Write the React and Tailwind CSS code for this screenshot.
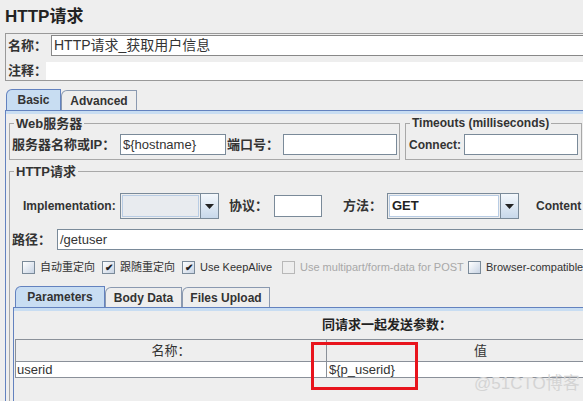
function Field({ className = "", children }) {
  return (
    <div className={`h-[21px] border border-[#7a8a99] bg-white px-[2px] text-[13px] leading-[19px] text-[#333] whitespace-nowrap ${className}`}>
      {children}
    </div>
  );
}

function Combo({ className = "", value, disabled }) {
  return (
    <div className={`flex h-[26px] border border-[#7a8a99] ${className}`}>
      <div className={`flex-1 m-[1px] border border-[#b8cce4] px-[2px] text-[13px] leading-[20px] font-bold text-[#222] ${disabled ? "bg-[#e8ebef]" : "bg-white"}`}>
        {value}
      </div>
      <div className="w-[18px] border-l border-[#7a8a99] bg-gradient-to-b from-[#f4f8fc] to-[#c8d8ea] flex items-center justify-center">
        <svg width="9" height="5" viewBox="0 0 9 5">
          <path d="M0 0h9L4.5 5z" fill="#222" />
        </svg>
      </div>
    </div>
  );
}

function Check({ checked, disabled, label, className = "" }) {
  return (
    <div className={`flex items-center h-[13px] shrink-0 ${className}`}>
      <div
        className={`w-[13px] h-[13px] border flex items-center justify-center ${
          disabled ? "border-[#b8b8b8] bg-[#eeeeee]" : "border-[#7a8a99] bg-gradient-to-br from-white to-[#c8d4e4]"
        }`}
      >
        {checked && <span className="text-[10px] leading-none text-[#222] font-bold">✔</span>}
      </div>
      <span className={`ml-[5px] text-[11px] whitespace-nowrap ${disabled ? "text-[#a8a8a8]" : "text-[#333]"}`}>{label}</span>
    </div>
  );
}

function Tab({ label, active, className = "" }) {
  return (
    <div
      className={`flex items-center justify-center border border-b-0 rounded-tl-[6px] text-[12px] font-bold text-[#333] ${
        active ? "h-[21px] bg-[#c8ddf2] border-[#6382bf]" : "h-[20px] bg-[#eeeeee] border-[#8a99b0]"
      } ${className}`}
    >
      {label}
    </div>
  );
}

export default function App() {
  return (
    <div className="w-[583px] h-[401px] overflow-hidden relative bg-[#eeeeee] text-[#333] font-['Liberation_Sans','Noto_Sans_CJK_SC',sans-serif]">
      <div className="h-[33px] flex items-center pl-[5px] text-[17px] font-bold text-[#222]">HTTP请求</div>

      {/* name / comment */}
      <div className="ml-[5px] w-[620px] h-[48px] border border-[#999999]">
        <div className="flex mt-[1px] h-[21px] items-center">
          <div className="w-[45px] shrink-0 pl-[2px] text-[13px] font-bold whitespace-nowrap">名称：</div>
          <div className="flex-1 h-[21px] border border-[#888888] bg-white px-[2px] text-[14px] leading-[19px] text-[#333]">HTTP请求_获取用户信息</div>
        </div>
        <div className="flex mt-[6px] h-[18px] items-center">
          <div className="w-[40px] shrink-0 pl-[2px] text-[13px] font-bold whitespace-nowrap">注释：</div>
          <div className="flex-1 h-[18px] bg-white"></div>
        </div>
      </div>

      {/* tabs */}
      <div className="flex items-end mt-[8px] ml-[6px]">
        <Tab label="Basic" active className="w-[55px]" />
        <Tab label="Advanced" className="w-[76px]" />
      </div>

      <div className="ml-[5px] border-t border-l border-[#6382bf]">
        <div className="h-[3px] bg-[#c8ddf2]"></div>

        <div className="flex items-start ml-[3px] mt-[2px]">
          <fieldset className="w-[391px] border border-[#a8a8a8] pb-[4px]">
            <legend className="ml-[4px] px-[2px] text-[13px] font-bold leading-[15px]">Web服务器</legend>
            <div className="flex items-center mt-[3px]">
              <div className="w-[110px] pl-[2px] text-[13px] font-bold whitespace-nowrap">服务器名称或IP：</div>
              <Field className="w-[106px]">{"${hostname}"}</Field>
              <div className="w-[57px] pl-[1px] text-[13px] font-bold whitespace-nowrap">端口号：</div>
              <Field className="w-[114px]"></Field>
            </div>
          </fieldset>

          <fieldset className="ml-[5px] w-[177px] border border-[#a8a8a8] pb-[4px]">
            <legend className="ml-[4px] px-[2px] text-[12px] font-bold leading-[15px] whitespace-nowrap">Timeouts (milliseconds)</legend>
            <div className="flex items-center mt-[3px]">
              <div className="w-[58px] pl-[3px] text-[12px] font-bold">Connect:</div>
              <Field className="w-[114px]"></Field>
            </div>
          </fieldset>
        </div>

        <fieldset className="ml-[3px] mt-[4px] w-[620px] h-[260px] border border-[#a8a8a8]">
          <legend className="ml-[4px] px-[2px] text-[13px] font-bold leading-[15px]">HTTP请求</legend>

          <div className="flex items-center mt-[14px] pl-[13px] h-[26px]">
            <div className="w-[97px] text-[12px] font-bold">Implementation:</div>
            <Combo className="w-[99px]" disabled />
            <div className="ml-[10px] w-[45px] text-[13px] font-bold whitespace-nowrap">协议：</div>
            <Field className="w-[48px] h-[22px]"></Field>
            <div className="ml-[21px] w-[44px] text-[13px] font-bold whitespace-nowrap">方法：</div>
            <Combo className="w-[132px]" value="GET" />
            <div className="ml-[17px] text-[12px] font-bold whitespace-nowrap">Content</div>
          </div>

          <div className="flex items-center mt-[10px]">
            <div className="w-[47px] pl-[2px] text-[13px] font-bold whitespace-nowrap">路径：</div>
            <Field className="flex-1">/getuser</Field>
          </div>

          <div className="flex items-center mt-[11px] pl-[12px]">
            <Check label="自动重定向" className="w-[80px]" />
            <Check label="跟随重定向" checked className="w-[80px]" />
            <Check label="Use KeepAlive" checked className="w-[100px]" />
            <Check label="Use multipart/form-data for POST" disabled className="w-[186px]" />
            <Check label="Browser-compatible headers" />
          </div>

          <div className="flex items-end mt-[12px] ml-[5px]">
            <Tab label="Parameters" active className="w-[90px]" />
            <Tab label="Body Data" className="w-[77px]" />
            <Tab label="Files Upload" className="w-[88px]" />
          </div>

          <div className="ml-[3px] h-[200px] border-t border-l border-[#6382bf]">
            <div className="h-[3px] bg-[#c8ddf2]"></div>
            <div className="h-[28px] flex items-center pl-[308px] text-[13px] font-bold text-[#222]">同请求一起发送参数：</div>
            <div className="ml-[1px] w-[619px] border-l border-t border-[#8a9099] grid grid-cols-[310px_1fr] text-[13px]">
              <div className="h-[22px] border-b border-[#8a9099] flex items-center justify-center">名称：</div>
              <div className="h-[22px] border-b border-l border-[#8a9099] flex items-center justify-center">值</div>
              <div className="h-[16px] border-b border-[#8a9099] bg-white pl-[1px] leading-[15px]">userid</div>
              <div className="h-[16px] border-b border-l border-[#8a9099] bg-white pl-[2px] leading-[15px]">{"${p_userid}"}</div>
            </div>
          </div>
        </fieldset>
      </div>

      {/* annotation overlay */}
      <div className="absolute left-[311px] top-[342px] w-[107px] h-[48px] border-[3px] border-[#e8141c]"></div>
      <div className="absolute left-[474px] top-[371px] text-[17px] text-[#d4d4d4] whitespace-nowrap">@51CTO博客</div>
    </div>
  );
}
